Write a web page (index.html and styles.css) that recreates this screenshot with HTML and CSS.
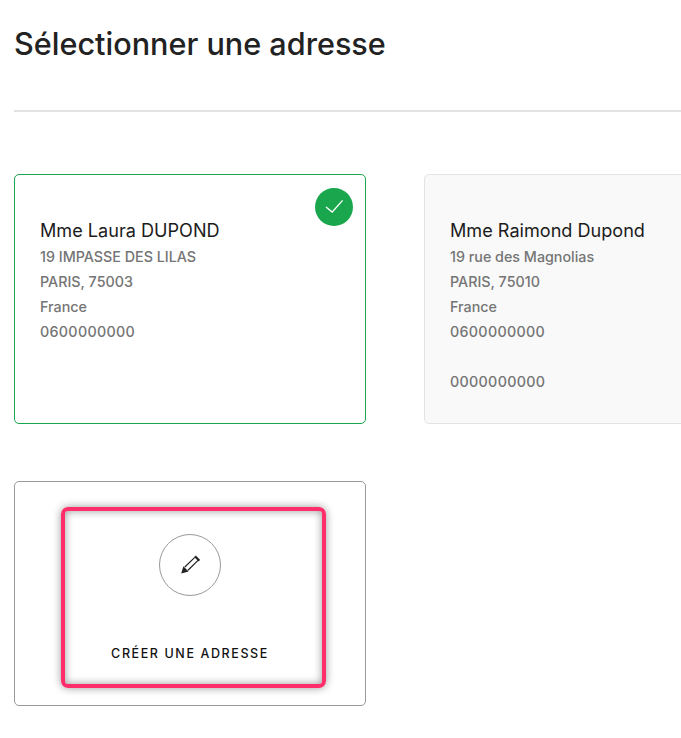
FILE: index.html
```html
<!DOCTYPE html>
<html lang="fr">
<head>
    <meta charset="UTF-8">
    <meta name="viewport" content="width=device-width, initial-scale=1.0">
    <title>Sélectionner une adresse</title>
    <link rel="stylesheet" href="styles.css">
</head>
<body>
    <div class="page">
        <h1>Sélectionner une adresse</h1>
        <div class="divider"></div>
        <div class="addresses">
            <div class="card selected">
                <span class="check">
                    <svg width="20" height="20" viewBox="0 0 20 20" fill="none" stroke="#fff" stroke-width="1.3">
                        <path d="M2 10 L8.2 15 L18.6 3.4"/>
                    </svg>
                </span>
                <p class="name">Mme Laura DUPOND</p>
                <p>19 IMPASSE DES LILAS</p>
                <p>PARIS, 75003</p>
                <p>France</p>
                <p class="phone">0600000000</p>
            </div>
            <div class="card grey">
                <p class="name">Mme Raimond Dupond</p>
                <p>19 rue des Magnolias</p>
                <p>PARIS, 75010</p>
                <p>France</p>
                <p class="phone">0600000000</p>
                <p>&nbsp;</p>
                <p class="phone">0000000000</p>
            </div>
        </div>
        <div class="create">
            <span class="circle">
                <svg width="20" height="20" viewBox="0 0 20 20" fill="none" stroke="#222" stroke-width="1.2">
                    <path d="M4.8 12 L14.8 2.4 M8 15.2 L18 5.4"/>
                    <path d="M15 1.2 L19.4 5.6" stroke-width="2.2"/>
                    <path d="M1.2 18.4 L3.4 11.2 L8.6 16.4 Z" fill="#222" stroke="none"/>
                </svg>
            </span>
            <span class="create-label">CRÉER UNE ADRESSE</span>
            <div class="highlight"></div>
        </div>
    </div>
</body>
</html>
```

FILE: styles.css
```css
html, body {
    margin: 0;
    padding: 0;
    height: 738px;
    overflow: hidden;
    background-color: #fff;
    font-family: Inter, "Noto Sans", sans-serif;
}
.page {
    padding: 24px 0 0 14px;
    overflow: hidden;
}
h1 {
    margin: 0;
    font-size: 30.6px;
    line-height: 40px;
    font-weight: 500;
    color: #222;
}
.divider {
    height: 2px;
    margin-top: 46px;
    background-color: #e3e3e3;
}
.addresses {
    display: flex;
    gap: 58px;
    margin-top: 62px;
}
.card {
    position: relative;
    flex: 0 0 352px;
    box-sizing: border-box;
    height: 250px;
    padding: 42px 25px 0;
    border: 1px solid #e4e4e4;
    border-radius: 5px;
}
.card.selected {
    border-color: #19a64d;
}
.card.grey {
    background-color: #f9f9f9;
}
.card p {
    margin: 0;
    font-size: 14.3px;
    line-height: 25px;
    font-weight: 500;
    color: #757575;
}
.card p.phone {
    letter-spacing: 0.3px;
}
.card p.name {
    font-size: 18.1px;
    line-height: 27px;
    font-weight: 400;
    color: #1c1c1c;
}
.check {
    position: absolute;
    top: 13px;
    right: 12px;
    display: flex;
    justify-content: center;
    align-items: center;
    width: 38px;
    height: 38px;
    border-radius: 50%;
    background-color: #19a64d;
}
.create {
    position: relative;
    display: flex;
    flex-direction: column;
    align-items: center;
    box-sizing: border-box;
    width: 352px;
    height: 225px;
    margin-top: 57px;
    padding-top: 52px;
    border: 1px solid #999;
    border-radius: 5px;
}
.circle {
    display: flex;
    justify-content: center;
    align-items: center;
    box-sizing: border-box;
    width: 62px;
    height: 62px;
    border: 1px solid #999;
    border-radius: 50%;
}
.create-label {
    margin-top: 50px;
    font-size: 12.5px;
    line-height: 16px;
    font-weight: 500;
    letter-spacing: 1.6px;
    color: #111;
}
.highlight {
    position: absolute;
    left: 46px;
    top: 25px;
    box-sizing: border-box;
    width: 265px;
    height: 181px;
    border: 4px solid #ff2e6b;
    border-radius: 7px;
    box-shadow: 0 0 8px rgba(0, 0, 0, 0.4), inset 0 0 8px rgba(0, 0, 0, 0.4);
}
```
